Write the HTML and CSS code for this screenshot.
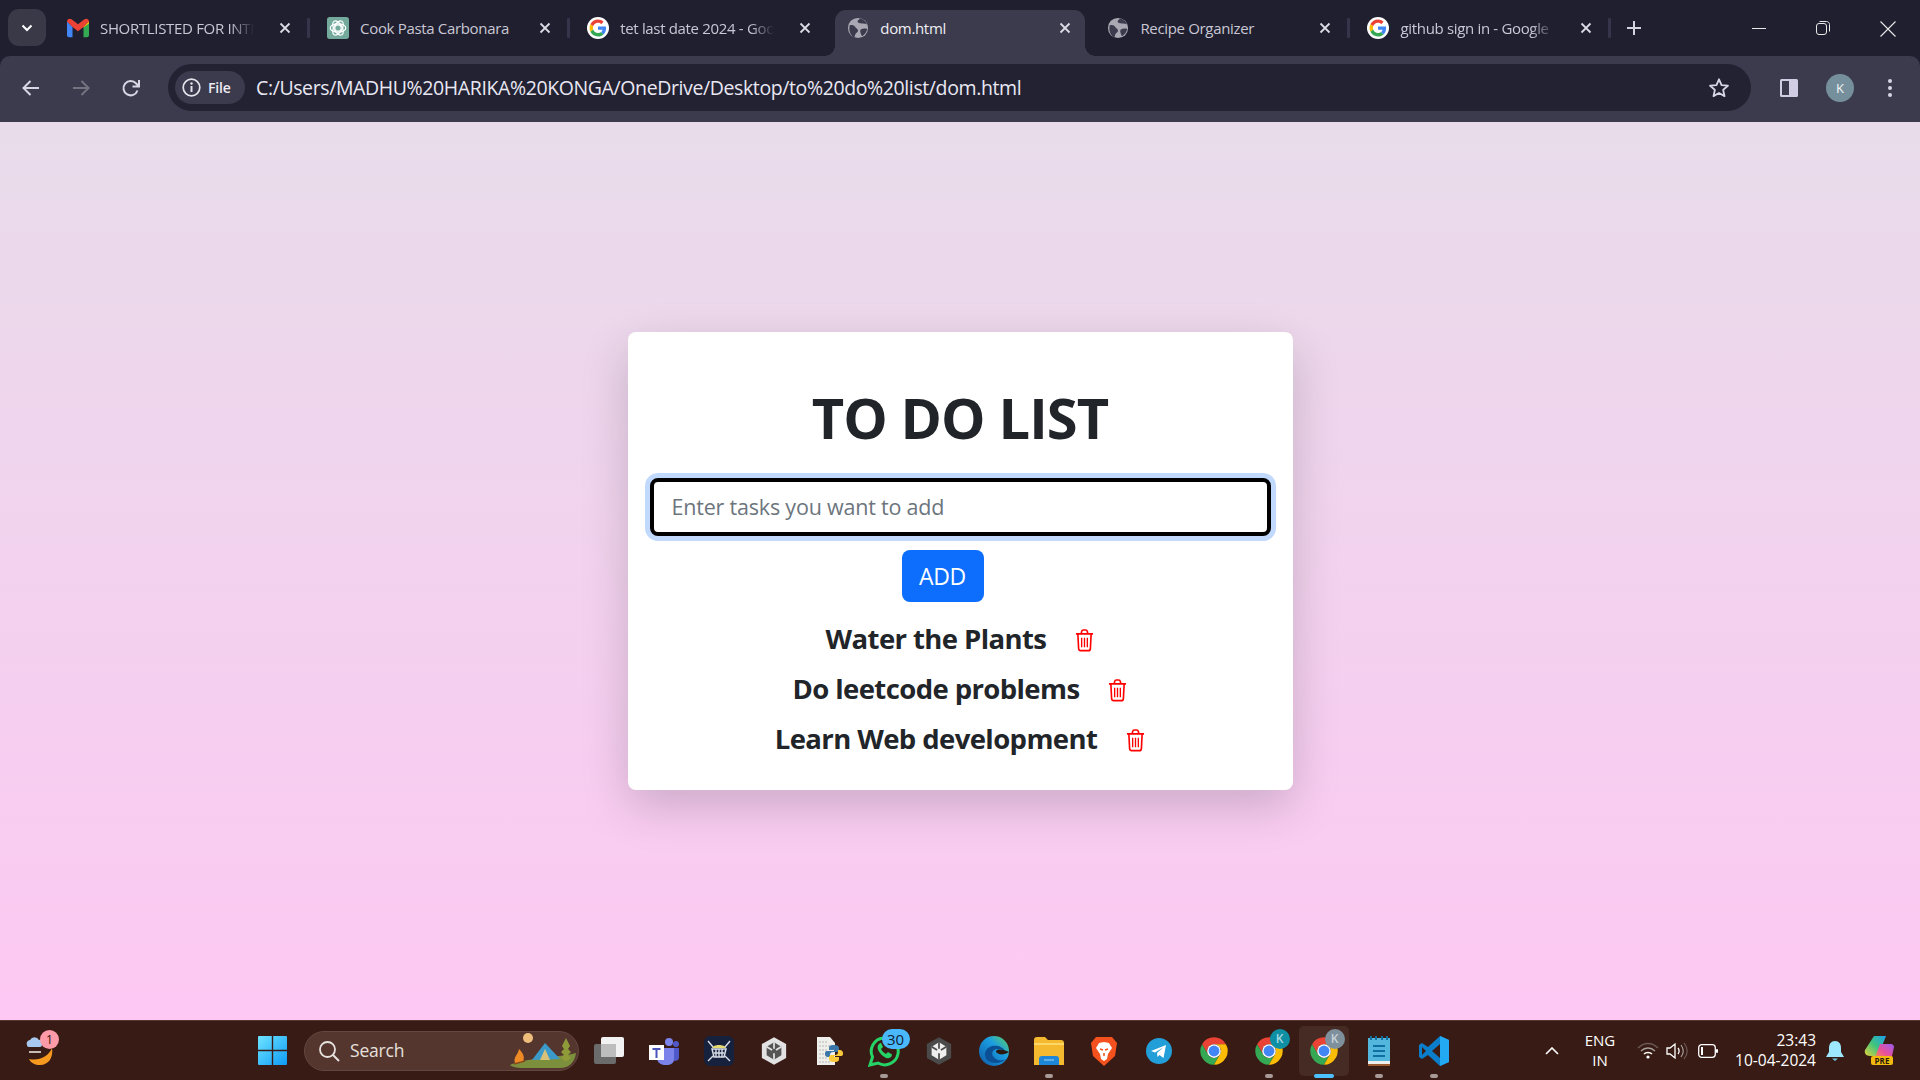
FILE: index.html
```html
<!DOCTYPE html>
<html lang="en">
<head>
<meta charset="utf-8">
<title>dom.html</title>
<link rel="stylesheet" href="styles.css">
</head>
<body>
<svg class="defs" width="0" height="0" aria-hidden="true">
  <symbol id="g" viewBox="0 0 48 48">
    <circle cx="24" cy="24" r="24" fill="#fff"/>
    <g transform="translate(5.5 5.5) scale(.77)">
      <path fill="#EA4335" d="M24 9.5c3.5 0 6.7 1.3 9.1 3.6l6.8-6.8C35.800 2.500 30.300 0 24 0 14.600 0 6.500 5.400 2.600 13.300l7.900 6.100C12.400 13.700 17.700 9.500 24 9.500z"/>
      <path fill="#4285F4" d="M46.900 24.500c0-1.600-.2-3.100-.4-4.500H24v9h12.900c-.6 3-2.200 5.500-4.700 7.200l7.700 6c4.500-4.200 7-10.300 7-17.700z"/>
      <path fill="#FBBC05" d="M10.500 28.600c-.5-1.500-.8-3-.8-4.600s.3-3.100.8-4.600l-7.900-6.100C.9 16.500 0 20.100 0 24s.9 7.500 2.600 10.700l7.900-6.100z"/>
      <path fill="#34A853" d="M24 48c6.500 0 11.900-2.100 15.900-5.800l-7.700-6c-2.200 1.400-4.900 2.300-8.200 2.300-6.300 0-11.600-4.200-13.500-9.900l-7.900 6.100C6.500 42.600 14.600 48 24 48z"/>
    </g>
  </symbol>
  <symbol id="globe" viewBox="0 0 24 24">
    <circle cx="12" cy="12" r="11" fill="#a9a8b3"/>
    <path fill="#3c3b4d" d="M3 9c3-1 5 0 6 2s3 2 3 4-2 2-3 4l-1 3.500C4 20.500 1.500 15 3 9zM14 1.500c-1 1.500-2.500 2-2.500 3.500s2.500 2 4.500 2 5 0 6 1.500c-1-3.500-4-6.500-8-7zM15 13.500c2-1 5-1 7-.5-.6 3.500-2.600 6-5.500 8-1-2-3-5.500-1.500-7.500z"/>
  </symbol>
  <symbol id="x" viewBox="0 0 12 12">
    <path d="M1.500 1.500l9 9m0-9l-9 9" stroke="currentColor" stroke-width="1.800" fill="none"/>
  </symbol>
  <symbol id="trash" viewBox="0 0 20 24">
    <g fill="none" stroke="#f00" stroke-width="1.700">
      <path d="M1 5h18M3 5l.8 15.500c.1 1.400 1 2.200 2.200 2.200h8c1.200 0 2.100-.8 2.200-2.200L17 5M6.500 5l.5-2.500c.2-.9.800-1.500 1.700-1.500h2.600c.9 0 1.500.6 1.700 1.500L13.500 5"/>
      <path d="M7 9v10M10 9v10M13 9v10" stroke-width="1.400"/>
    </g>
  </symbol>
  <symbol id="chrome" viewBox="0 0 48 48">
    <path fill="#EA4335" d="M24 2A22 22 0 0 1 43.050 13H24a11 11 0 0 0-9.530 16.500L4.950 13A22 22 0 0 1 24 2z"/>
    <path fill="#34A853" d="M4.950 13A22 22 0 0 0 24 46l9.530-16.500a11 11 0 0 1-19.060 0z"/>
    <path fill="#FBBC05" d="M43.050 13A22 22 0 0 1 24 46l9.530-16.500A11 11 0 0 0 24 13z"/>
    <circle cx="24" cy="24" r="11" fill="#fff"/>
    <circle cx="24" cy="24" r="8.700" fill="#4285F4"/>
  </symbol>
  <symbol id="unity" viewBox="0 0 30 32">
    <path d="M15 0l14 8v16l-14 8-14-8V8z" fill="currentColor"/>
    <path d="M15 6l8.500 5v10L15 26l-8.500-5V11z" fill="var(--ink)"/>
    <path d="M15 6v7.500m0 5V26M6.500 11l6.300 3.800m4.400 0l6.300-3.800" fill="none" stroke="currentColor" stroke-width="2"/>
  </symbol>
</svg>

<header class="chrome">
  <div class="tabstrip">
    <button class="tab-search"><svg width="12" height="8" viewBox="0 0 12 8"><path d="M1.500 1.500L6 6l4.500-4.500" fill="none" stroke="#fff" stroke-width="2"/></svg></button>
    <div class="tabs">
      <div class="tab">
        <svg class="favicon" viewBox="0 0 24 20"><path fill="#4285F4" d="M0 3v15c0 1 .8 2 2 2h4V9z"/><path fill="#34A853" d="M24 3v15c0 1-.8 2-2 2h-4V9z"/><path fill="#EA4335" d="M0 3c0-3 3-4 5-2.500L12 6l7-5.500C21-1 24 0 24 3l-6 6-6 4.500L6 9z"/><path fill="#FBBC05" d="M18 9l6-6v2l-6 4.500z"/></svg>
        <span class="tab-title fade">SHORTLISTED FOR INTE</span>
        <svg class="tab-x"><use href="#x"/></svg>
      </div>
      <div class="tab">
        <svg class="favicon" viewBox="0 0 24 24"><rect width="24" height="24" rx="3" fill="#74aa9c"/><g fill="none" stroke="#fff" stroke-width="1.300"><circle cx="12" cy="12" r="3.500"/><ellipse cx="12" cy="12" rx="8.500" ry="4.500"/><ellipse cx="12" cy="12" rx="8.500" ry="4.500" transform="rotate(60 12 12)"/><ellipse cx="12" cy="12" rx="8.500" ry="4.500" transform="rotate(120 12 12)"/></g></svg>
        <span class="tab-title">Cook Pasta Carbonara</span>
        <svg class="tab-x"><use href="#x"/></svg>
      </div>
      <div class="tab no-sep">
        <svg class="favicon"><use href="#g"/></svg>
        <span class="tab-title fade">tet last date 2024 - Goo</span>
        <svg class="tab-x"><use href="#x"/></svg>
      </div>
      <div class="tab active">
        <svg class="favicon"><use href="#globe"/></svg>
        <span class="tab-title">dom.html</span>
        <svg class="tab-x"><use href="#x"/></svg>
      </div>
      <div class="tab">
        <svg class="favicon"><use href="#globe"/></svg>
        <span class="tab-title">Recipe Organizer</span>
        <svg class="tab-x"><use href="#x"/></svg>
      </div>
      <div class="tab">
        <svg class="favicon"><use href="#g"/></svg>
        <span class="tab-title fade">github sign in - Google</span>
        <svg class="tab-x"><use href="#x"/></svg>
      </div>
    </div>
    <svg class="new-tab" width="16" height="16" viewBox="0 0 16 16"><path d="M8 1v14M1 8h14" stroke="#d5d3e0" stroke-width="2"/></svg>
    <div class="win-controls">
      <svg width="14" height="14" viewBox="0 0 14 14"><path d="M0 7.500h14" stroke="#e8e8e8" stroke-width="1"/></svg>
      <svg width="14" height="14" viewBox="0 0 14 14"><rect x=".5" y="2.500" width="10" height="11" rx="2.500" fill="none" stroke="#e8e8e8"/><path d="M3.500.5h7c1.700 0 3 1.300 3 3v7" fill="none" stroke="#e8e8e8"/></svg>
      <svg width="16" height="16" viewBox="0 0 16 16"><path d="M.5.5l15 15m0-15l-15 15" stroke="#e8e8e8" stroke-width="1.100"/></svg>
    </div>
  </div>
  <div class="toolbar">
    <div class="nav-btns">
      <svg width="20" height="20" viewBox="0 0 20 20"><path d="M18 10H3m6.500-7L2.500 10l7 7" fill="none" stroke="#d8d6e4" stroke-width="2"/></svg>
      <svg width="20" height="20" viewBox="0 0 20 20"><path d="M2 10h15m-6.500-7l7 7-7 7" fill="none" stroke="#74737f" stroke-width="2"/></svg>
      <svg width="20" height="20" viewBox="0 0 20 20"><path d="M16.500 12.500a7.200 7.200 0 1 1-1.300-7L17.500 8M18 2v6.500h-6.500" fill="none" stroke="#d8d6e4" stroke-width="2"/></svg>
    </div>
    <div class="omnibox">
      <div class="chip">
        <svg width="19" height="19" viewBox="0 0 19 19"><circle cx="9.500" cy="9.500" r="8.300" fill="none" stroke="#e4e3ec" stroke-width="1.700"/><path d="M9.500 8v6" stroke="#e4e3ec" stroke-width="2"/><circle cx="9.500" cy="5.500" r="1.200" fill="#e4e3ec"/></svg>
        <span class="chip-text">File</span>
      </div>
      <span class="url">C:/Users/MADHU%20HARIKA%20KONGA/OneDrive/Desktop/to%20do%20list/dom.html</span>
      <svg class="star" width="22" height="22" viewBox="0 0 24 24"><path d="M12 2.500l2.800 6.300 6.900.7-5.200 4.600 1.500 6.800-6-3.500-6 3.500 1.500-6.800-5.200-4.600 6.900-.7z" fill="none" stroke="#d8d6e4" stroke-width="2" stroke-linejoin="round"/></svg>
    </div>
    <svg class="side-panel" width="20" height="20" viewBox="0 0 20 20"><rect x="1" y="1" width="18" height="18" rx="1.500" fill="#d0cde4"/><rect x="3" y="3" width="7" height="14" fill="#3c3b4d"/></svg>
    <div class="avatar">K</div>
    <svg class="kebab" width="6" height="20" viewBox="0 0 6 20"><circle cx="3" cy="3" r="2" fill="#d8d6e4"/><circle cx="3" cy="10" r="2" fill="#d8d6e4"/><circle cx="3" cy="17" r="2" fill="#d8d6e4"/></svg>
  </div>
</header>

<main class="page">
  <section class="card">
    <h1 class="title">TO DO LIST</h1>
    <input class="task-input" type="text" placeholder="Enter tasks you want to add">
    <button class="add-btn">ADD</button>
    <ul class="tasks">
      <li class="task"><span>Water the Plants</span><svg class="trash"><use href="#trash"/></svg></li>
      <li class="task"><span>Do leetcode problems</span><svg class="trash"><use href="#trash"/></svg></li>
      <li class="task"><span>Learn Web development</span><svg class="trash"><use href="#trash"/></svg></li>
    </ul>
  </section>
</main>

<footer class="taskbar">
  <div class="weather">
    <svg width="28" height="36" viewBox="0 0 28 36"><path d="M26 15c1.500 9-3 17-12 17-5 0-9-2-11-6 10 2 19-2 23-11z" fill="#f59a1f"/><path d="M1 12a3.500 3.500 0 0 1 3-5 5 5 0 0 1 9 0 3 3 0 0 1 3 5 2 2 0 0 1-2 2H3c-1.500 0-2-1-2-2z" fill="#a9c8f0"/><path d="M3 19h12" stroke="#f4f0ea" stroke-width="1.500"/></svg>
    <span class="weather-badge">1</span>
  </div>
  <div class="cell start-cell">
    <svg width="29" height="29" viewBox="0 0 29 29"><defs><linearGradient id="win" x1="0" y1="0" x2="1" y2="1"><stop offset="0" stop-color="#6ee4ff"/><stop offset="1" stop-color="#0e9bf5"/></linearGradient></defs><path fill="url(#win)" d="M0 1a1 1 0 0 1 1-1h12.800v13.800H0zM15.200 0H28a1 1 0 0 1 1 1v12.800H15.200zM0 15.200h13.800V29H1a1 1 0 0 1-1-1zM15.200 15.200H29V28a1 1 0 0 1-1 1H15.200z"/></svg>
  </div>
  <div class="search">
    <svg width="22" height="22" viewBox="0 0 22 22"><circle cx="9.500" cy="9.500" r="7.500" fill="none" stroke="#e8e3e0" stroke-width="1.800"/><path d="M15 15l6 6" stroke="#e8e3e0" stroke-width="2"/></svg>
    <span class="search-text">Search</span>
    <svg class="search-art" width="66" height="40" viewBox="0 0 66 40"><path d="M0 34c10-6 52-8 66-12-1 9-7 15-16 15H12c-5 0-10-1-12-3z" fill="#7c8f3d"/><circle cx="18" cy="7" r="5" fill="#eebf7c"/><path d="M22 29l13-17 15 16z" fill="#3b9ac9"/><path d="M30 29l5-11 5 11z" fill="#d8c27a"/><path d="M5 32c-2-6 3-8 4-14 4 4 7 9 3 14z" fill="#f08a24"/><path d="M4 33l11-3" stroke="#8a4a20" stroke-width="1.500"/><path d="M55 30l-4-3 3-3-3-3 3-3-2-3 4-8 4 8-2 3 3 3-3 3 3 3-4 3z" fill="#8f9a38"/></svg>
  </div>
  <div class="apps">
    <div class="cell"><svg width="32" height="32" viewBox="0 0 32 32"><rect x="1" y="9" width="22" height="20" rx="2" fill="#6b6b6b"/><rect x="8" y="2" width="23" height="20" rx="2" fill="#f2f2f2"/><rect x="8" y="9" width="15" height="13" fill="#bdbdbd"/></svg></div>
    <div class="cell"><svg width="30" height="28" viewBox="0 0 30 28"><circle cx="20" cy="5" r="4" fill="#7b83eb"/><circle cx="27" cy="7" r="3" fill="#5059c9"/><path d="M24 11h6v9c0 3-2 4-5 4z" fill="#5059c9"/><path d="M8 11h17v11c0 4-3 6-8 6s-8-2-9-6z" fill="#7b83eb"/><rect y="8" width="15" height="15" fill="#fff"/><path d="M3.500 11h8v2H8.500v8h-2v-8h-3z" fill="#4b53bc"/></svg></div>
    <div class="cell"><svg width="30" height="30" viewBox="0 0 30 30"><rect width="30" height="30" rx="6" fill="#16213d"/><path d="M8 12c1-4 13-4 14 0z" fill="#e4d96f"/><path d="M8 13h14l-2 8H10z" fill="none" stroke="#d8dde8" stroke-width="1.500"/><path d="M10 17h10M12 13v8m3-8v8m3-8v8M4 5l5 6M26 5l-5 6M4 25l5-5M26 25l-5-5" stroke="#d8dde8" stroke-width="1.400"/></svg></div>
    <div class="cell unity-light"><svg width="26" height="28"><use href="#unity"/></svg></div>
    <div class="cell"><svg width="28" height="30" viewBox="0 0 28 30"><path d="M2 1h13l5 6v22H2z" fill="#eeeeea"/><path d="M4 6h9M4 10h12M4 14h9M4 18h9M4 22h9M4 26h12" stroke="#b8b8b4" stroke-width="1" stroke-dasharray="2 1"/><path d="M18 9c-3 0-4 1-4 3v2h5v1h-7c-2 0-2 2-2 3 0 2 1 3 3 3h2v-2c0-2 1-3 3-3h4c1 0 2-1 2-2v-2c0-2-2-3-4-3z" fill="#3a76a8"/><path d="M20 26c3 0 4-1 4-3v-2h-5v-1h7c2 0 2-2 2-3s-1-3-3-3h-2v2c0 2-1 3-3 3h-4c-1 0-2 1-2 2v2c0 2 2 3 4 3z" fill="#fbc93c"/></svg></div>
    <div class="cell"><svg width="32" height="32" viewBox="0 0 32 32"><path d="M2 30l2.500-8A13.500 13.500 0 1 1 10 28z" fill="none" stroke="#25d366" stroke-width="3"/><path d="M11 9c-2 2-2 5 1 9s7 6 9 5c2-.5 3-2 3-3.500L20 17l-2 2c-2-1-4-3-5-5l2-2-2-4c-1 0-1.500.5-2 1z" fill="#25d366"/></svg><span class="count-badge">30</span><i class="dot"></i></div>
    <div class="cell unity-dark"><svg width="26" height="30"><use href="#unity"/></svg></div>
    <div class="cell"><svg width="30" height="30" viewBox="0 0 30 30"><defs><linearGradient id="edge" x1="0" y1="1" x2="1" y2="0"><stop offset="0" stop-color="#0c59a4"/><stop offset=".6" stop-color="#1b9de2"/><stop offset="1" stop-color="#5ed35f"/></linearGradient></defs><circle cx="15" cy="15" r="15" fill="url(#edge)"/><path d="M8 24c-4-5-2-12 5-14 6-1 11 1 13 5-4-2-9-3-12 0-2 3 0 7 5 9 3 1 6 0 8-1-5 5-14 5-19 1z" fill="#0b4f95"/><path d="M30 16c-3 2-7 3-10 2-3-1-4-3-2-4 3-1 8 0 12 2z" fill="#2a1a12"/></svg></div>
    <div class="cell"><svg width="30" height="28" viewBox="0 0 30 28"><path d="M0 3c0-2 1-3 3-3h8l3 3h13c2 0 3 1 3 3v22H0z" fill="#f4b92e"/><path d="M0 6h30v2H0z" fill="#fcd868"/><path d="M5 28v-6c0-2 1-3 3-3h14c2 0 3 1 3 3v6z" fill="#1d86d6"/><path d="M10 23h10" stroke="#8bc8f0" stroke-width="1.200"/></svg><i class="dot"></i></div>
    <div class="cell"><svg width="26" height="30" viewBox="0 0 26 30"><path d="M5 1h16l5 6-2 13-11 10L2 20 0 7z" fill="#f4511e"/><path d="M13 6l-5 1-3 5 4 6 1 5 3 2 3-2 1-5 4-6-3-5z" fill="#fff"/><path d="M9 13l3 1m5-1l-3 1m-1 6v-3" stroke="#f4511e" stroke-width="1.500"/></svg></div>
    <div class="cell"><svg width="26" height="26" viewBox="0 0 26 26"><circle cx="13" cy="13" r="13" fill="#229ed9"/><path d="M5 13l15-6-2.500 13-4-3-2 2-.5-4 6-5.500-8 5z" fill="#fff"/></svg></div>
    <div class="cell"><svg width="30" height="30"><use href="#chrome"/></svg></div>
    <div class="cell"><svg width="30" height="30"><use href="#chrome"/></svg><span class="k-badge teal">K</span><i class="dot"></i></div>
    <div class="cell active-cell"><svg width="30" height="30"><use href="#chrome"/></svg><span class="k-badge slate">K</span><i class="bar"></i></div>
    <div class="cell"><svg width="22" height="30" viewBox="0 0 22 30"><rect y="2" width="22" height="28" fill="#9c5a32"/><rect y="2" width="22" height="26" fill="#52b6dd"/><path d="M0 25h22v3H0z" fill="#eee"/><path d="M5 10h12M5 15h12M5 20h12" stroke="#0e6fa0" stroke-width="2"/><path d="M3 0v4m5-4v4m6-4v4m5-4v4" stroke="#0e6fa0" stroke-width="2"/></svg><i class="dot"></i></div>
    <div class="cell"><svg width="30" height="30" viewBox="0 0 30 30"><path d="M21 0l9 4v22l-9 4-12-11-6 4-3-2V9l3-2 6 4z" fill="#0a7ecb"/><path d="M21 0l9 4v22l-9 4z" fill="#23a9f2"/><path d="M21 8l-8 7 8 7z" fill="#3a1c14"/><path d="M3 11l4 4-4 4z" fill="#3a1c14"/></svg><i class="dot"></i></div>
  </div>
  <div class="tray">
    <svg class="tray-chevron" width="14" height="8" viewBox="0 0 14 8"><path d="M1 7l6-6 6 6" fill="none" stroke="#fff" stroke-width="1.600"/></svg>
    <div class="lang"><span>ENG</span><span>IN</span></div>
    <svg class="tray-wifi" width="22" height="18" viewBox="0 0 22 18"><path d="M1 6c6-6 14-6 20 0" fill="none" stroke="#6d5a54" stroke-width="1.300"/><path d="M4 9c4-4 10-4 14 0" fill="none" stroke="#a8a09c" stroke-width="1.300"/><path d="M7 12c2-2 6-2 8 0" fill="none" stroke="#fff" stroke-width="1.500"/><circle cx="11" cy="15" r="1.600" fill="#fff"/></svg>
    <svg class="tray-vol" width="22" height="18" viewBox="0 0 22 18"><path d="M1 6h3l5-4v14l-5-4H1z" fill="none" stroke="#fff" stroke-width="1.300"/><path d="M12 6c1.500 2 1.500 4 0 6" fill="none" stroke="#fff" stroke-width="1.300"/><path d="M15 3c3 4 3 8 0 12" fill="none" stroke="#a8a09c" stroke-width="1.200"/><path d="M18 1c4 5 4 11 0 16" fill="none" stroke="#6d5a54" stroke-width="1.200"/></svg>
    <svg class="tray-batt" width="20" height="14" viewBox="0 0 20 14"><rect x=".7" y=".7" width="16.600" height="12.600" rx="3" fill="none" stroke="#fff" stroke-width="1.300"/><rect x="3" y="3" width="2" height="8" fill="#fff"/><rect x="18" y="5" width="2" height="4" rx="1" fill="#fff"/></svg>
    <div class="clock"><span>23:43</span><span>10-04-2024</span></div>
    <svg class="tray-bell" width="18" height="20" viewBox="0 0 18 20"><path d="M9 0c4 0 6 3 6 7v4l3 5H0l3-5V7c0-4 2-7 6-7z" fill="#9de8ff"/><path d="M6 17.500h6L9 20z" fill="#6ecbe8"/></svg>
    <div class="copilot">
      <svg width="30" height="26" viewBox="0 0 30 26"><defs><linearGradient id="c1" x1="0" y1="1" x2="1" y2="0"><stop offset="0" stop-color="#e6d33c"/><stop offset=".5" stop-color="#3fc47c"/><stop offset="1" stop-color="#1c9ff0"/></linearGradient><linearGradient id="c2" x1="0" y1="1" x2="1" y2="0"><stop offset="0" stop-color="#f6a13a"/><stop offset=".5" stop-color="#e8509a"/><stop offset="1" stop-color="#9a5cf0"/></linearGradient></defs><path d="M10 0h12L14 20H6c-4 0-6-3-5-6z" fill="url(#c1)"/><path d="M16 8h11c2 0 3 2 3 3l-2 9c-1 3-2 4-5 4H10z" fill="url(#c2)"/></svg>
      <span class="pre">PRE</span>
    </div>
  </div>
</footer>
</body>
</html>
```

FILE: styles.css
```css
* { box-sizing: border-box; }
html, body { height: 100%; }
body {
  margin: 0;
  height: 1080px;
  overflow: hidden;
  display: flex;
  flex-direction: column;
  font-family: "Open Sans", "Noto Sans", sans-serif;
}
.defs { position: absolute; }

/* browser chrome */
.chrome { background: #201f30; flex: none; }
.tabstrip { height: 56px; display: flex; align-items: flex-start; position: relative; }
.tab-search {
  width: 38px; height: 37px; margin: 9px 0 0 8px; padding: 0;
  border: 0; border-radius: 11px; background: #3a3948;
  display: flex; align-items: center; justify-content: center; flex: none;
}
.tabs { display: flex; margin-left: 4px; flex: none; }
.tab {
  width: 260.1px; height: 46px; margin-top: 10px; padding: 0 19px 10px 17px;
  display: flex; align-items: center; gap: 11px;
  position: relative; color: #d4d2dd; flex: none;
}
.tab::after {
  content: ""; position: absolute; right: 0; top: 8px; width: 3px; height: 20px;
  background: #35344a; border-radius: 1px;
}
.tab.no-sep::after { display: none; }
.favicon { width: 22px; height: 22px; flex: none; }
.tab-title {
  flex: 1; min-width: 0; white-space: nowrap;
  font-size: 15px; letter-spacing: -.33px; color: #c9c7d3;
}
.tab-title.fade {
  -webkit-mask-image: linear-gradient(to left, transparent 6px, #000 30px);
  mask-image: linear-gradient(to left, transparent 6px, #000 30px);
}
.tab-x { width: 12px; height: 12px; flex: none; margin-left: 8px; color: #dcdae4; }
.tab.active { z-index: 1; }
.tab.active .tab-title { color: #eeeef3; }
.tab.active::before {
  content: ""; position: absolute; z-index: -1; left: 5px; right: 5px; top: 0; bottom: 0;
  background: #3c3b4d; border-radius: 11px 11px 0 0;
}
.tab.active::after {
  left: -5px; right: -5px; top: auto; bottom: 0; width: auto; height: 10px; border-radius: 0;
  background:
    radial-gradient(circle at 0 0, transparent 9.5px, #3c3b4d 10px) left bottom / 10px 10px no-repeat,
    radial-gradient(circle at 100% 0, transparent 9.5px, #3c3b4d 10px) right bottom / 10px 10px no-repeat;
}
.new-tab { margin: 20px 0 0 15px; flex: none; }
.win-controls {
  margin-left: auto; width: 168px; padding: 21px 24px 0 0;
  display: flex; justify-content: space-between; flex: none;
}
.toolbar {
  height: 66px; background: #3c3b4d; border-radius: 10px 10px 0 0;
  display: flex; align-items: center; padding-bottom: 3px;
}
.nav-btns { display: flex; gap: 30px; padding-left: 21px; width: 168px; flex: none; }
.omnibox {
  width: 1583px; height: 47px; background: #232233; border-radius: 24px;
  display: flex; align-items: center; padding-left: 7px; flex: none;
}
.chip {
  width: 70px; height: 33px; background: #3c3b4d; border-radius: 17px;
  display: flex; align-items: center; gap: 7px; padding-left: 7px; flex: none;
}
.chip-text { font-size: 14px; font-weight: 600; color: #eceaf2; letter-spacing: -.2px; }
.url { margin-left: 11px; font-size: 19.5px; color: #e9e8f2; letter-spacing: -.39px; white-space: nowrap; }
.star { margin-left: auto; margin-right: 21px; }
.side-panel { margin-left: 28px; flex: none; }
.avatar {
  width: 28px; height: 28px; margin-left: 27px; border-radius: 50%;
  background: #768f9c; color: #f3f6f7; font-size: 13px;
  display: flex; align-items: center; justify-content: center; flex: none;
}
.kebab { margin-left: 33px; flex: none; }

/* page */
.page {
  flex: 1; min-height: 0;
  background: linear-gradient(#e8dcea, #fdc8f3);
  display: flex; align-items: center; justify-content: center;
}
.card {
  width: 665px; height: 458px; padding: 52px 22px 0;
  background: #fff; border-radius: 8px;
  box-shadow: 0 16px 48px rgba(0, 0, 0, .175);
  display: flex; flex-direction: column; align-items: center;
  margin-bottom: 20px;
}
.title {
  margin: 0 0 27px; font-size: 56px; line-height: 67px; font-weight: 700;
  color: #212529; letter-spacing: -.9px;
}
.task-input {
  width: 621px; height: 58px; flex: none; padding: 0 18px 2px;
  border: 4px solid #000; border-radius: 8px; outline: 0;
  box-shadow: 0 0 0 5px #c2d9fe;
  font: 400 21.5px "Open Sans", sans-serif; letter-spacing: -.2px; color: #212529;
}
.task-input::placeholder { color: #6c757d; opacity: 1; }
.add-btn {
  width: 82px; height: 52px; margin: 14px 35px 0 0; flex: none; padding: 0;
  border: 0; border-radius: 8px; background: #0d6efd; color: #fff;
  font: 400 23px "Open Sans", sans-serif; letter-spacing: -.3px;
}
.tasks { list-style: none; margin: 12px 0 0; padding: 0; width: 100%; }
.task {
  height: 50.4px; display: flex; align-items: center; justify-content: center; gap: 29px;
  font-size: 27.5px; font-weight: 700; color: #212529; letter-spacing: -.6px;
}
.task span { margin-top: -2px; }
.trash { width: 19px; height: 23px; flex: none; margin-top: 2px; }

/* taskbar */
.taskbar {
  height: 60px; flex: none; background: #381b14; border-top: 1px solid #55372f;
  display: flex; align-items: center; padding-left: 26px; color: #fff;
  margin-top: auto;
}
.weather { width: 28px; height: 36px; position: relative; flex: none; margin-right: 190.5px; }
.weather-badge {
  position: absolute; left: 14px; top: -3px; width: 19px; height: 19px; border-radius: 50%;
  background: #ff9aa8; color: #2a1512; font-size: 12px; text-align: center; line-height: 19px;
}
.cell {
  width: 55px; height: 59px; position: relative; flex: none;
  display: flex; align-items: center; justify-content: center;
}
.start-cell { margin-right: 4.5px; }
.search {
  width: 275px; height: 40px; border-radius: 20px; background: #55362f;
  border: 1px solid #644740; flex: none;
  display: flex; align-items: center; padding-left: 13px; position: relative;
}
.search-text { margin: -2px 0 0 10px; font-size: 17.5px; color: #e6e0dc; letter-spacing: -.2px; }
.search-art { margin-left: auto; margin-right: 2px; }
.apps { display: flex; margin-left: 2.5px; flex: none; }
.unity-light { color: #e2e2e2; --ink: #555555; }
.unity-dark { color: #4a4a4a; --ink: #eeeeee; }
.count-badge {
  position: absolute; left: 25px; top: 8px; width: 28px; height: 20px; border-radius: 10px;
  background: #4ab8ff; color: #12222f; font-size: 15px; line-height: 20px; text-align: center;
}
.dot {
  position: absolute; left: 23.5px; bottom: 2px; width: 8px; height: 4px;
  border-radius: 2px; background: #a89a96;
}
.bar {
  position: absolute; left: 17.5px; bottom: 2px; width: 20px; height: 4px;
  border-radius: 2px; background: #4cc2ff;
}
.k-badge {
  position: absolute; left: 28px; top: 8px; width: 20px; height: 20px; border-radius: 50%;
  font-size: 12px; font-weight: 600; line-height: 20px; text-align: center;
}
.k-badge.teal { background: #0e8fa3; color: #a8d8e2; }
.k-badge.slate { background: #7d909c; color: #c7d2d8; }
.active-cell::before {
  content: ""; position: absolute; left: 2.5px; top: 5px; width: 50px; height: 50px;
  background: rgba(255, 255, 255, .07); border-radius: 5px;
}
.active-cell svg { position: relative; }
.tray { margin-left: auto; display: flex; align-items: center; padding-right: 26px; flex: none; }
.tray-chevron { margin-right: 16px; }
.lang, .clock { display: flex; flex-direction: column; font-size: 15px; line-height: 20px; color: #fff; margin-top: -2px; }
.lang { width: 50px; align-items: center; }
.tray-wifi { margin-left: 12px; }
.tray-vol { margin-left: 7px; }
.tray-batt { margin-left: 10px; }
.clock { width: 96px; align-items: flex-end; font-size: 15.5px; margin-left: 2px; }
.tray-bell { margin-left: 10px; }
.copilot { width: 30px; height: 30px; margin-left: 20px; position: relative; flex: none; }
.pre {
  position: absolute; left: 7px; top: 20px; width: 22px; height: 9px; border-radius: 2px;
  background: #f2b90f; color: #2a1a0c; font-size: 8px; font-weight: 700; line-height: 9px; text-align: center;
}
```
